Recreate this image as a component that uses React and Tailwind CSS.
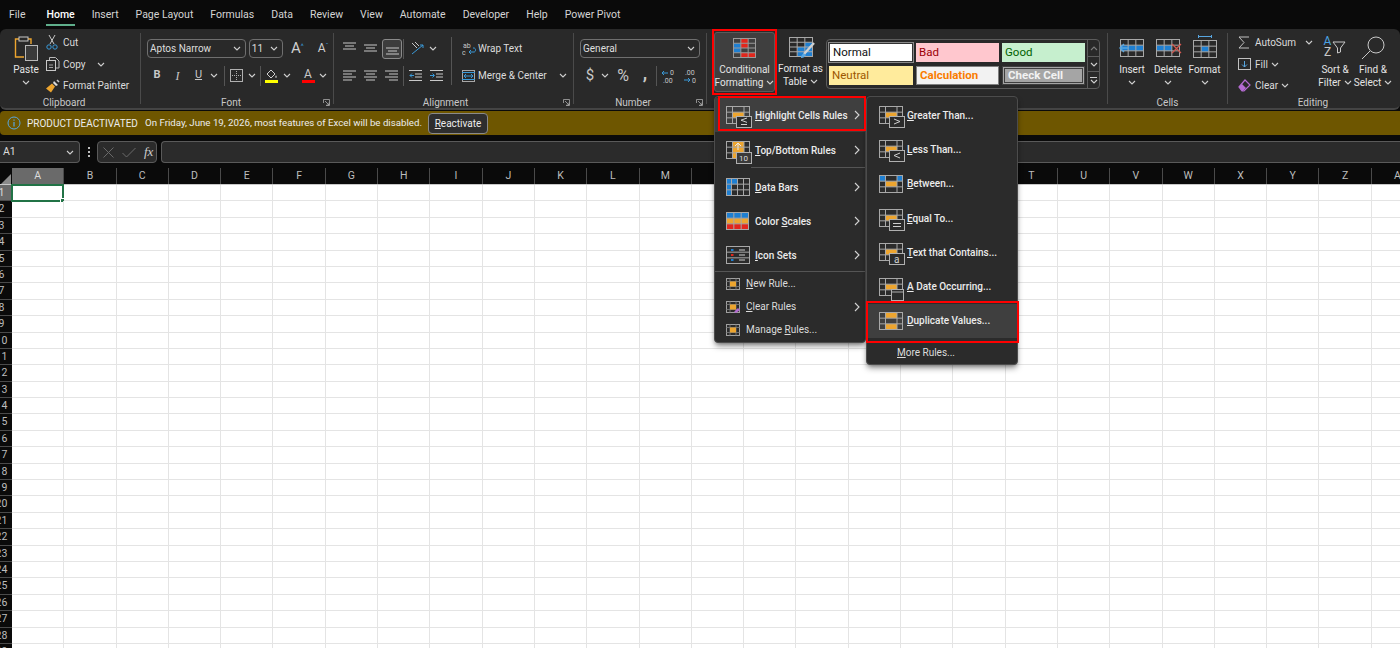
import { Fragment } from 'react';

const TABS = ['File', 'Home', 'Insert', 'Page Layout', 'Formulas', 'Data', 'Review', 'View', 'Automate', 'Developer', 'Help', 'Power Pivot'];
const COLUMNS = 'ABCDEFGHIJKLMNOPQRSTUVWXYZA'.split('');
const ROWS = Array.from({ length: 29 }, (_, i) => i + 1);

const BLUE = '#1f7fd1';
const ORANGE = '#eda52f';
const RED = '#e1261c';
const MENU_XS = [0, 6, 17.5, 23];

function Chev({ className = '' }) {
  return (
    <svg width="8" height="5" viewBox="0 0 8 5" className={className}>
      <path d="M1 1l3 3 3-3" fill="none" stroke="#cfcfcf" strokeWidth="1.1" />
    </svg>
  );
}

function Arrow() {
  return (
    <svg width="6" height="10" viewBox="0 0 6 10">
      <path d="M1 1l4 4-4 4" fill="none" stroke="#d4d4d4" strokeWidth="1.1" />
    </svg>
  );
}

// grid with some coloured cells: [col, row, colour, colspan, rowspan]
// xs gives the column edges when the columns are not equally wide
function Sheet({ w = 24, h = 18, cols = 3, rows = 3, xs, cells = [], stroke = '#a8a8a8', children }) {
  const edges = xs || Array.from({ length: cols + 1 }, (_, i) => (i * (w - 1)) / cols);
  const ch = (h - 1) / rows;
  return (
    <svg width={w} height={h} viewBox={`0 0 ${w} ${h}`} className="overflow-visible">
      {cells.map(([c, r, fill, cs = 1, rs = 1], i) => (
        <rect key={i} x={0.5 + edges[c]} y={0.5 + r * ch} width={edges[c + cs] - edges[c]} height={ch * rs} fill={fill} />
      ))}
      {edges.map((x, i) => (
        <line key={i} x1={0.5 + x} x2={0.5 + x} y1="0" y2={h} stroke={stroke} />
      ))}
      {Array.from({ length: rows + 1 }, (_, i) => (
        <line key={i} y1={0.5 + i * ch} y2={0.5 + i * ch} x1="0" x2={w} stroke={stroke} />
      ))}
      {children}
    </svg>
  );
}

function Badge({ children }) {
  return (
    <g>
      <rect x="10.5" y="10.5" width="15" height="11" fill="#2b2b2b" stroke="#b0b0b0" />
      {children}
    </g>
  );
}

function MenuIcon({ type }) {
  if (type === 'dup') return <Sheet w={23} h={18} xs={MENU_XS} cells={[[1, 0, ORANGE], [1, 2, ORANGE]]} />;
  if (type === 'between') return <Sheet w={23} h={18} xs={MENU_XS} cells={[[0, 0, BLUE], [2, 0, BLUE], [1, 1, ORANGE]]} />;
  return (
    <Sheet w={23} h={18} xs={MENU_XS} cells={[[1, 1, ORANGE]]}>
      {type === 'date' ? (
        <g>
          <rect x="12.5" y="11.5" width="12" height="11" fill="#2b2b2b" stroke="#b0b0b0" />
          <line x1="12" x2="25" y1="14" y2="14" stroke="#b0b0b0" />
        </g>
      ) : (
        <Badge>
          {type === 'gt' && <path d="M15 13l6 2.5-6 2.5" fill="none" stroke="#cfcfcf" />}
          {type === 'lt' && <path d="M21 13l-6 2.5 6 2.5" fill="none" stroke="#cfcfcf" />}
          {type === 'eq' && <path d="M14 14.5h8M14 17.5h8" stroke="#cfcfcf" />}
          {type === 'a' && <text x="15" y="19.5" fontSize="10" fill="#cfcfcf">a</text>}
        </Badge>
      )}
    </Sheet>
  );
}

function LeftIcon({ type }) {
  if (type === 'highlight') {
    return (
      <Sheet w={23} h={18} xs={MENU_XS} cells={[[1, 1, ORANGE]]}>
        <Badge><path d="M21 12l-6 2.2 6 2.2M15 18.5h6" fill="none" stroke="#cfcfcf" /></Badge>
      </Sheet>
    );
  }
  if (type === 'top') {
    return (
      <Sheet w={23} h={18} xs={MENU_XS} cells={[[1, 0, ORANGE, 1, 3]]}>
        <path d="M12 9V2M9 5l3-3 3 3" fill="none" stroke="#e8e8e8" />
        <rect x="10.5" y="11.5" width="15" height="11" fill="#3a3a3a" stroke="#b0b0b0" />
        <text x="13" y="20" fontSize="8" fill="#dcdcdc">10</text>
      </Sheet>
    );
  }
  if (type === 'bars') {
    return <Sheet w={23} h={18} xs={[0, 5, 11, 17, 23]} rows={3} cells={[[0, 0, BLUE, 2, 1], [0, 1, BLUE, 1, 1], [0, 2, BLUE, 1, 1]]} />;
  }
  if (type === 'scales') return <Sheet w={23} h={18} cols={3} rows={3} cells={[[0, 0, BLUE, 3, 1], [0, 1, ORANGE, 3, 1], [0, 2, RED, 3, 1]]} />;
  return (
    <Sheet w={23} h={18} xs={[0, 23]} rows={3}>
      <rect x="5" y="3" width="2.5" height="2" fill={BLUE} />
      <rect x="5" y="8" width="2.5" height="2" fill={RED} />
      <rect x="5" y="13" width="2.5" height="2" fill={BLUE} />
      <path d="M13 4h6M13 9h6M13 14h6" stroke="#cfcfcf" />
    </Sheet>
  );
}

function SmallRuleIcon({ type }) {
  return (
    <svg width="14" height="12" viewBox="0 0 14 12">
      <rect x="0.5" y="0.5" width="13" height="11" fill="none" stroke="#a0a0a0" />
      <path d="M4 .5v11M10 .5v11M.5 3.5h13M.5 8.5h13" stroke="#707070" />
      <rect x="4" y="3.5" width="6" height="5" fill={ORANGE} />
      {type === 'clear' && <path d="M8 11l4-4 2 2-4 3z" fill="#b46bd1" />}
    </svg>
  );
}

function Launcher() {
  return (
    <svg width="7" height="7" viewBox="0 0 7 7" className="absolute right-[3px] bottom-[3px]">
      <path d="M.5 4V.5H6.5V6.5H3M2 2l4 4M6 3.5V6H3.5" fill="none" stroke="#a8a8a8" strokeWidth="0.8" />
    </svg>
  );
}

function Group({ width, label, pad = '', children, noBorder }) {
  return (
    <div className={`relative flex flex-col shrink-0 ${width} ${noBorder ? '' : 'border-r border-[#4a4a4a]'}`}>
      <div className="flex-1 min-h-0">{children}</div>
      {label && (
        <div className={`relative h-[14px] mb-[-5px] flex items-center justify-center text-[10px] text-[#c8c8c8] ${pad}`}>
          {label}
        </div>
      )}
    </div>
  );
}

function BigButton({ icon, lines, width = 'w-[36px]', chevronBelow }) {
  return (
    <div className={`${width} shrink-0 flex flex-col items-center text-[10px] leading-[13px] text-[#e4e4e4]`}>
      <div className="h-[30px] flex items-center justify-center">{icon}</div>
      {lines.map((l, i) => (
        <div key={i} className="whitespace-nowrap flex items-center gap-[3px] h-[13px]">
          {l}
          {!chevronBelow && i === lines.length - 1 && <Chev />}
        </div>
      ))}
      {chevronBelow && <div className="h-[13px] flex items-center"><Chev /></div>}
    </div>
  );
}

function Combo({ width, children }) {
  return (
    <div className={`${width} h-[19px] flex items-center justify-between pl-[2px] pr-[4px] border border-[#6f6f6f] rounded-[4px] text-[10px] text-[#dedede]`}>
      <span>{children}</span>
      <Chev />
    </div>
  );
}

function Cell({ width, children }) {
  return <div className={`${width} shrink-0 h-full flex items-center justify-center text-[#c8c8c8]`}>{children}</div>;
}

function VSep() {
  return <div className="w-px h-[20px] shrink-0 bg-[#555555]" />;
}

function Lines({ rows }) {
  return (
    <svg width="13" height="13" viewBox="0 0 13 13">
      {rows.map(([x1, x2, y], i) => (
        <line key={i} x1={x1} x2={x2} y1={y} y2={y} stroke="#c8c8c8" />
      ))}
    </svg>
  );
}

function Indent({ flip }) {
  return (
    <svg width="13" height="11" viewBox="0 0 13 11">
      <path d="M0 .5h13M6 4h7M6 7h7M0 10.5h13" stroke="#c8c8c8" />
      <path d={flip ? 'M0 5.5h4M2.5 3.5l2 2-2 2' : 'M5 5.5H1M3 3.5l-2 2 2 2'} fill="none" stroke="#3a9ad9" />
    </svg>
  );
}

function StyleCell({ className, children }) {
  return <div className={`h-[19px] flex items-center pl-[3px] text-[11.5px] ${className}`}>{children}</div>;
}

function MenuItem({ icon, arrow, active, small, className = '', children, pl = 'pl-[12px]', gap = 'gap-[6px]' }) {
  return (
    <div className={`flex items-center ${pl} ${gap} pr-[5px] ${small ? 'h-[23px]' : 'h-[34.3px]'} ${active ? 'bg-[#3f3f3f]' : ''} ${className}`}>
      <div className={`${small ? 'w-[16px]' : 'w-[27px]'} shrink-0 flex items-center`}>{icon}</div>
      <div className={`flex-1 whitespace-nowrap text-[10px] ${small ? 'text-[#dcdcdc]' : 'font-medium text-[#ececec]'}`}>{children}</div>
      {arrow && <Arrow />}
    </div>
  );
}

export default function App() {
  return (
    <div className="relative w-[1400px] h-[648px] overflow-hidden flex flex-col bg-[#0a0a0a] font-['Roboto',sans-serif]">
      {/* Tabs */}
      <div className="h-[29px] shrink-0 flex items-center gap-[17px] pl-[9px] text-[10.5px] text-[#d4d4d4]">
        {TABS.map((t) => (
          <div key={t} className={`relative whitespace-nowrap ${t === 'Home' ? 'font-medium text-white' : ''} ${t === 'File' ? 'mr-[4px]' : ''}`}>
            {t}
            {t === 'Home' && <div className="absolute left-0 right-0 top-[17px] h-[2px] bg-[#5fae8b]" />}
          </div>
        ))}
      </div>

      {/* Ribbon */}
      <div className="h-[81px] shrink-0 flex py-[4px] bg-[#292929] rounded-[6px] border-b-2 border-[#444444]">
        <Group width="w-[141px]" label="Clipboard" pad="pr-[12px]">
          <div className="flex pl-[8px]">
            <BigButton
              chevronBelow
              lines={['Paste']}
              icon={
                <svg width="25" height="26" viewBox="0 0 25 26">
                  <path d="M5 4H1.5V22H10" fill="none" stroke={ORANGE} strokeWidth="1.4" />
                  <path d="M14 4h3v5" fill="none" stroke={ORANGE} strokeWidth="1.4" />
                  <rect x="5" y="2" width="9" height="4" fill="#292929" stroke="#c8c8c8" />
                  <rect x="11.5" y="10.5" width="12" height="15" fill="#3a3a3a" stroke="#b8b8b8" />
                </svg>
              }
            />
            <div className="-mt-[1px] ml-[2px] text-[10px] text-[#dcdcdc]">
              <div className="h-[21px] flex items-center">
                <div className="w-[17px]">
                  <svg width="12" height="15" viewBox="0 0 12 15">
                    <path d="M3 0l5 9M9 0L4 9" stroke="#c8c8c8" />
                    <circle cx="3" cy="12" r="2.2" fill="none" stroke="#3a9ad9" />
                    <circle cx="9" cy="12" r="2.2" fill="none" stroke="#3a9ad9" />
                  </svg>
                </div>
                Cut
              </div>
              <div className="h-[22px] flex items-center">
                <div className="w-[17px]">
                  <svg width="14" height="14" viewBox="0 0 14 14">
                    <path d="M3.5 3V.5h6l3.5 3.5v7h-3" fill="none" stroke="#b8b8b8" />
                    <rect x=".5" y="3.5" width="9" height="10" fill="#292929" stroke="#c8c8c8" />
                    <path d="M3 8h4M3 10.5h4" stroke="#a0a0a0" />
                  </svg>
                </div>
                Copy
                <Chev className="ml-[11px]" />
              </div>
              <div className="h-[21px] flex items-center">
                <div className="w-[17px]">
                  <svg width="14" height="14" viewBox="0 0 14 14">
                    <path d="M8 2l4 4-2 1-3-3z" fill="#dcdcdc" />
                    <path d="M6 4.5l3 3-4 6-5-4z" fill={ORANGE} />
                    <path d="M11 1l2 2" stroke="#c8c8c8" strokeWidth="1.6" />
                  </svg>
                </div>
                Format Painter
              </div>
            </div>
          </div>
        </Group>
        <Group width="w-[193px]" label={<>Font<Launcher /></>} pad="pr-[12px]">
          <div className="pl-[6px] pt-[6px]">
            <div className="flex items-center gap-[3px] h-[18px]">
              <Combo width="w-[100px]">Aptos Narrow</Combo>
              <Combo width="w-[34px]">11</Combo>
              <div className="w-[20px] ml-[2px] text-center text-[15px] leading-none text-[#d0d0d0]">A<sup className="text-[7px] text-[#3a9ad9]">^</sup></div>
              <div className="w-[20px] ml-[3px] text-center text-[12px] leading-none text-[#d0d0d0]">A<sup className="text-[7px] text-[#3a9ad9]">ˇ</sup></div>
            </div>
            <div className="flex items-center h-[19px] mt-[9px] text-[11px]">
              <Cell width="w-[20px]"><span className="font-bold">B</span></Cell>
              <Cell width="w-[21px]"><span className="italic font-['Liberation_Serif',serif] text-[12px]">I</span></Cell>
              <Cell width="w-[21px]"><span className="underline">U</span></Cell>
              <Cell width="w-[10px]"><Chev /></Cell>
              <div className="w-[5px]" />
              <VSep />
              <Cell width="w-[23px]">
                <svg width="13" height="13" viewBox="0 0 13 13">
                  <rect x=".5" y=".5" width="12" height="12" fill="none" stroke="#b0b0b0" />
                  <path d="M6.5 0v13M0 6.5h13" stroke="#b0b0b0" strokeDasharray="1 1" />
                </svg>
              </Cell>
              <Cell width="w-[8px]"><Chev /></Cell>
              <div className="w-[4px]" />
              <VSep />
              <Cell width="w-[22px]">
                <svg width="14" height="15" viewBox="0 0 14 15">
                  <path d="M2 6l4-4 4 4-4 4z" fill="none" stroke="#d0d0d0" />
                  <path d="M11 7l1 2.5h-2z" fill="#d0d0d0" />
                  <rect x="0" y="12" width="13" height="3" fill="#ffff00" />
                </svg>
              </Cell>
              <Cell width="w-[8px]"><Chev /></Cell>
              <div className="w-[9px]" />
              <Cell width="w-[16px]">
                <div className="flex flex-col items-center leading-[11px] text-[12px]">
                  A
                  <div className="w-[13px] h-[3px] bg-[#ff0000]" />
                </div>
              </Cell>
              <div className="w-[3px]" />
              <Cell width="w-[8px]"><Chev /></Cell>
            </div>
          </div>
        </Group>
        <Group width="w-[240px]" label={<>Alignment<Launcher /></>} pad="pr-[16px]">
          <div className="pl-[8px] pt-[6px] flex">
            <div className="w-[108px] shrink-0">
              <div className="flex items-center h-[19px]">
                <Cell width="w-[14px]"><Lines rows={[[0, 13, 1], [2, 11, 4], [0, 13, 7]]} /></Cell>
                <div className="w-[7px]" />
                <Cell width="w-[14px]"><Lines rows={[[0, 13, 3], [2, 11, 6], [0, 13, 9]]} /></Cell>
                <div className="w-[5px]" />
                <div className="w-[20px] h-[20px] flex items-center justify-center border border-[#8a8a8a] rounded-[3px] bg-[#3d3d3d]">
                  <Lines rows={[[0, 13, 6], [2, 11, 9], [0, 13, 12]]} />
                </div>
                <div className="w-[1px]" />
                <VSep />
                <Cell width="w-[25px]">
                  <svg width="14" height="13" viewBox="0 0 14 13">
                    <path d="M2 1l5 5M5 0l4 4" stroke="#c8c8c8" />
                    <path d="M2 12L13 3M10 3h3v3" fill="none" stroke="#3a9ad9" />
                  </svg>
                </Cell>
                <Chev />
              </div>
              <div className="flex items-center h-[19px] mt-[8px]">
                <Cell width="w-[14px]"><Lines rows={[[0, 13, 2], [0, 9, 5], [0, 13, 8], [0, 9, 11]]} /></Cell>
                <div className="w-[7px]" />
                <Cell width="w-[14px]"><Lines rows={[[0, 13, 2], [2, 11, 5], [0, 13, 8], [2, 11, 11]]} /></Cell>
                <div className="w-[7px]" />
                <Cell width="w-[14px]"><Lines rows={[[0, 13, 2], [4, 13, 5], [0, 13, 8], [4, 13, 11]]} /></Cell>
                <div className="w-[5px]" />
                <VSep />
                <div className="w-[4px]" />
                <Cell width="w-[14px]"><Indent /></Cell>
                <div className="w-[7px]" />
                <Cell width="w-[14px]"><Indent flip /></Cell>
              </div>
            </div>
            <div className="w-px h-[48px] -mt-[2px] ml-[1px] bg-[#555555]" />
            <div className="pl-[10px] text-[10px] text-[#dcdcdc]">
              <div className="flex items-center h-[19px]">
                <svg width="16" height="14" viewBox="0 0 16 14">
                  <text x="1" y="6" fontSize="7" fill="#c8c8c8">ab</text>
                  <text x="0" y="13" fontSize="7" fill="#c8c8c8">c</text>
                  <path d="M7 10h5c2 0 2-4 0-4h-1M9 8l-2 2 2 2" fill="none" stroke="#3a9ad9" />
                </svg>
                Wrap Text
              </div>
              <div className="flex items-center h-[19px] mt-[8px] gap-[3px]">
                <svg width="13" height="12" viewBox="0 0 13 12">
                  <rect x=".5" y=".5" width="12" height="11" fill="none" stroke="#a8a8a8" />
                  <path d="M0 2.5h13M0 9.5h13" stroke="#3a9ad9" />
                  <path d="M2 6h9M4 4L2 6l2 2M9 4l2 2-2 2" fill="none" stroke="#3a9ad9" />
                </svg>
                Merge &amp; Center
                <Chev className="ml-[9px]" />
              </div>
            </div>
          </div>
        </Group>
        <Group width="w-[133px]" label={<>Number<Launcher /></>} pad="pr-[14px]">
          <div className="pl-[6px] pt-[6px]">
            <Combo width="w-[120px]">General</Combo>
            <div className="flex items-center h-[19px] mt-[8px] text-[#c8c8c8]">
              <Cell width="w-[20px]"><span className="text-[15px]">$</span></Cell>
              <Cell width="w-[10px]"><Chev /></Cell>
              <Cell width="w-[26px]"><span className="text-[16px]">%</span></Cell>
              <Cell width="w-[18px]"><span className="text-[18px] leading-none font-bold -mt-[6px]">,</span></Cell>
              <div className="w-[2px]" />
              <VSep />
              <Cell width="w-[24px]">
                <svg width="14" height="14" viewBox="0 0 14 14">
                  <path d="M0 4h6M2 2L0 4l2 2" fill="none" stroke="#3a9ad9" />
                  <text x="8" y="6" fontSize="7" fill="#c8c8c8">0</text>
                  <text x="1" y="14" fontSize="7" fill="#c8c8c8">.00</text>
                </svg>
              </Cell>
              <Cell width="w-[20px]">
                <svg width="14" height="14" viewBox="0 0 14 14">
                  <text x="1" y="6" fontSize="7" fill="#c8c8c8">.00</text>
                  <path d="M0 11h6M4 9l2 2-2 2" fill="none" stroke="#3a9ad9" />
                  <text x="8" y="14" fontSize="7" fill="#c8c8c8">0</text>
                </svg>
              </Cell>
            </div>
          </div>
        </Group>
        <Group width="w-[401px]">
          <div className="flex pl-[7px] -mt-[1px]">
            <div className="w-[61px] h-[60px] bg-[#3f3f3f] rounded-[3px] border border-[#5a5a5a] flex justify-center">
              <BigButton
                width="w-[61px]"
                lines={['Conditional', 'Formatting']}
                icon={<Sheet w={23} h={20} cols={3} rows={4} stroke="#9a9a9a" cells={[[1, 0, RED], [0, 1, BLUE], [1, 1, RED], [0, 2, BLUE], [1, 3, RED, 2, 1], [2, 2, '#3f3f3f']]} />}
              />
            </div>
            <div className="ml-[2px] -mr-[2px]">
              <BigButton
                width="w-[47px]"
                lines={['Format as', 'Table']}
                icon={
                  <Sheet w={24} h={20} cols={3} rows={4} cells={[[1, 2, BLUE, 2, 2], [2, 1, BLUE]]}>
                    <path d="M25 6L15 17" stroke="#d0d0d0" strokeWidth="2.4" />
                    <path d="M12 21c2 0 5-1 4-4-3-1-4 2-4 4z" fill="#58a6e0" />
                  </Sheet>
                }
              />
            </div>
            <div className="w-[274px] h-[50px] mt-[7px] ml-[4px] flex border border-[#5c5c5c] rounded-[4px] pl-[2px] pt-[3px] shrink-0">
              <div className="grid grid-cols-[84px_83px_83px] gap-x-[3px] gap-y-[4px] w-[260px] h-[42px]">
                <StyleCell className="bg-white border border-[#333333] outline outline-[#8a8a8a] text-[#111111]">Normal</StyleCell>
                <StyleCell className="bg-[#ffc7ce] text-[#9c0006]">Bad</StyleCell>
                <StyleCell className="bg-[#c6efce] text-[#006100]">Good</StyleCell>
                <StyleCell className="bg-[#ffeb9c] text-[#9c5700]">Neutral</StyleCell>
                <StyleCell className="bg-[#f2f2f2] border border-[#7f7f7f] font-bold text-[#fa7d00]">Calculation</StyleCell>
                <StyleCell className="bg-[#a5a5a5] border-[3px] border-double border-[#3f3f3f] font-bold text-[#f2f2f2]">Check Cell</StyleCell>
              </div>
              <div className="flex flex-col w-[12px] h-[48px] -mt-[3px] ml-[1px] border-l border-[#5c5c5c]">
                <div className="h-[16px] flex items-center justify-center"><Chev className="rotate-180 opacity-50" /></div>
                <div className="h-[16px] flex items-center justify-center border-y border-[#5c5c5c]"><Chev /></div>
                <div className="h-[16px] flex flex-col items-center justify-center gap-[1px]">
                  <div className="w-[7px] h-px bg-[#cfcfcf]" />
                  <Chev />
                </div>
              </div>
            </div>
          </div>
        </Group>
        <Group width="w-[120px]" label="Cells">
          <div className="flex pl-[6px]">
            <BigButton
              chevronBelow
              lines={['Insert']}
              icon={
                <Sheet w={24} h={18} cols={3} rows={3} cells={[[0, 1, BLUE, 3, 1]]}>
                  <path d="M9 9H0M4 5L0 9l4 4" fill="none" stroke="#58a6e0" strokeWidth="1.4" />
                </Sheet>
              }
            />
            <BigButton
              chevronBelow
              lines={['Delete']}
              icon={
                <Sheet w={24} h={18} cols={3} rows={3} cells={[[0, 1, BLUE, 2, 1]]}>
                  <path d="M16 5l9 9M25 5l-9 9" stroke="#d1574f" strokeWidth="1.3" />
                </Sheet>
              }
            />
            <BigButton
              chevronBelow
              lines={['Format']}
              width="w-[37px]"
              icon={
                <div className="flex flex-col items-center gap-[2px] mt-[-3px]">
                  <svg width="14" height="3" viewBox="0 0 14 3"><path d="M.5 0v3M13.5 0v3M0 1.5h14" stroke="#58a6e0" /></svg>
                  <Sheet w={24} h={18} cols={3} rows={3} cells={[[1, 1, BLUE]]} />
                </div>
              }
            />
          </div>
        </Group>
        <Group width="w-[170px]" label="Editing" noBorder>
          <div className="flex pl-[10px]">
            <div className="w-[78px] shrink-0 -mt-[1px] text-[10px] text-[#dcdcdc]">
              <div className="h-[21px] flex items-center">
                <svg width="12" height="13" viewBox="0 0 12 13" className="mr-[5px]">
                  <path d="M11 1H1l5 5.5L1 12h10" fill="none" stroke="#c0c0c0" />
                </svg>
                AutoSum
                <Chev className="ml-[9px]" />
              </div>
              <div className="h-[22px] flex items-center">
                <svg width="13" height="12" viewBox="0 0 13 12" className="mr-[4px]">
                  <rect x=".5" y=".5" width="12" height="11" fill="none" stroke="#c0c0c0" />
                  <path d="M6.5 3v6M4 6.5l2.5 2.5L9 6.5" fill="none" stroke="#58a6e0" />
                </svg>
                Fill
                <Chev className="ml-[3px]" />
              </div>
              <div className="h-[21px] flex items-center">
                <svg width="13" height="13" viewBox="0 0 13 13" className="mr-[4px]">
                  <path d="M1 8l6-7 5 5-6 6H4z" fill="none" stroke="#b46bd1" strokeWidth="1.2" />
                  <path d="M1 8l3-3 4 4-3 3H4z" fill="#b46bd1" />
                </svg>
                Clear
                <Chev className="ml-[3px]" />
              </div>
            </div>
            <BigButton
              width="w-[38px]"
              lines={['Sort &', 'Filter']}
              icon={
                <div className="flex items-center gap-[1px] -mt-[2px] text-[12px] leading-[11px]">
                  <div className="flex flex-col items-center">
                    <span className="text-[#4aa3e3]">A</span>
                    <span className="text-[#c8c8c8]">Z</span>
                  </div>
                  <svg width="14" height="14" viewBox="0 0 14 14">
                    <path d="M1 2h12L8.5 8v4l-3 1V8z" fill="none" stroke="#c8c8c8" />
                  </svg>
                </div>
              }
            />
            <BigButton
              width="w-[38px]"
              lines={['Find &', 'Select']}
              icon={
                <svg width="25" height="25" viewBox="0 0 25 25" className="-mt-[1px]">
                  <circle cx="15" cy="10" r="8" fill="none" stroke="#c8c8c8" />
                  <path d="M9 16l-8 8" stroke="#c8c8c8" />
                </svg>
              }
            />
          </div>
        </Group>
      </div>

      {/* Deactivation notice */}
      <div className="h-[24px] mt-px shrink-0 flex items-center pl-[7px] bg-[#6e5600] rounded-l-[4px] text-[10px] text-[#ececec]">
        <svg width="14" height="14" viewBox="0 0 14 14" className="mr-[6px]">
          <circle cx="7" cy="7" r="6" fill="none" stroke="#58a6e0" />
          <path d="M7 6v4.5M7 3.5v1.2" stroke="#58a6e0" strokeWidth="1.2" />
        </svg>
        <span className="w-[118px] whitespace-nowrap">PRODUCT DEACTIVATED</span>
        <span className="w-[283px] whitespace-nowrap text-[9.7px]">On Friday, June 19, 2026, most features of Excel will be disabled.</span>
        <div className="w-[60px] h-[21px] flex items-center justify-center border border-[#8a8a8a] rounded-[4px] bg-[#2e2e2e]">
          <span><u>R</u>eactivate</span>
        </div>
      </div>

      {/* Formula bar */}
      <div className="h-[22px] mt-[6px] shrink-0 flex items-center bg-[#0a0a0a]">
        <div className="w-[80px] h-full flex items-center justify-between pl-[3px] pr-[5px] bg-[#2b2b2b] border border-l-0 border-[#5a5a5a] rounded-r-[4px] text-[10.5px] text-[#dcdcdc]">
          A1
          <Chev />
        </div>
        <div className="w-[17px] flex flex-col items-center gap-[2px]">
          <div className="w-[2px] h-[2px] bg-[#bdbdbd]" />
          <div className="w-[2px] h-[2px] bg-[#bdbdbd]" />
          <div className="w-[2px] h-[2px] bg-[#bdbdbd]" />
        </div>
        <div className="w-[60px] h-full flex items-center pl-[5px] gap-[8px] bg-[#2b2b2b] border border-[#5a5a5a] rounded-[4px]">
          <svg width="11" height="11" viewBox="0 0 11 11"><path d="M.5.5l10 10M10.5.5l-10 10" stroke="#6a6a6a" /></svg>
          <svg width="14" height="11" viewBox="0 0 14 11"><path d="M.5 6l4 4 9-9" fill="none" stroke="#6a6a6a" /></svg>
          <span className="italic font-['Liberation_Serif',serif] text-[13px] text-[#cfcfcf]">fx</span>
        </div>
        <div className="flex-1 h-full ml-[4px] bg-[#2b2b2b] border-y border-l border-[#5a5a5a] rounded-l-[4px]" />
      </div>

      {/* Sheet */}
      <div className="flex-1 min-h-0 mt-[5px] bg-white overflow-hidden">
        <div className="grid grid-cols-[12px_repeat(27,52.3px)] h-[17px] bg-[#0a0a0a] border-b border-[#c8c8c8]">
          <div className="flex items-end justify-end pr-px">
            <svg width="10" height="10" viewBox="0 0 10 10"><path d="M10 0v10H0z" fill="#8a8a8a" /></svg>
          </div>
          {COLUMNS.map((c, i) => (
            <div
              key={i}
              className={`flex items-center justify-center text-[10.5px] border-r border-[#4a4a4a] ${i === 0 ? 'bg-[#6a6a6a] text-[#dcdcdc]' : 'text-[#bdbdbd]'}`}
            >
              {c}
            </div>
          ))}
        </div>
        <div className="grid grid-cols-[12px_repeat(27,52.3px)] auto-rows-[16.4px]">
          {ROWS.map((r) => (
            <Fragment key={r}>
              <div className={`overflow-hidden border-b border-[#4a4a4a] text-[10.5px] leading-[16px] ${r === 1 ? 'bg-[#6a6a6a] text-[#dcdcdc]' : 'bg-[#0a0a0a] text-[#bdbdbd]'}`}>
                <div className="-ml-[6px] w-[15px] text-center">{r}</div>
              </div>
              {COLUMNS.map((c, i) => (
                <div key={i} className="relative border-r border-b border-[#e4e4e4]">
                  {r === 1 && i === 0 && (
                    <div className="absolute -left-px -top-px w-[53px] h-[17.5px] border-2 border-[#217346]">
                      <div className="absolute -right-[3px] -bottom-[3px] w-[5px] h-[5px] bg-[#217346] border border-white" />
                    </div>
                  )}
                </div>
              ))}
            </Fragment>
          ))}
        </div>
      </div>

      {/* Conditional Formatting menu */}
      <div className="absolute left-[714px] top-[96px] w-[152px] h-[247px] pt-px bg-[#2b2b2b] border border-[#4c4c4c] rounded-[4px] shadow-md shadow-black/40">
        <MenuItem active arrow pl="pl-[11px]" gap="gap-[2px]" className="!h-[34px]" icon={<LeftIcon type="highlight" />}><u>H</u>ighlight Cells Rules</MenuItem>
        <MenuItem arrow pl="pl-[11px]" gap="gap-[2px]" className="!h-[34px] mt-px" icon={<LeftIcon type="top" />}><u>T</u>op/Bottom Rules</MenuItem>
        <div className="ml-[36px] h-px mb-[2px] bg-[#555555]" />
        <MenuItem arrow pl="pl-[11px]" gap="gap-[2px]" className="!h-[34px]" icon={<LeftIcon type="bars" />}><u>D</u>ata Bars</MenuItem>
        <MenuItem arrow pl="pl-[11px]" gap="gap-[2px]" className="!h-[34px]" icon={<LeftIcon type="scales" />}>Color <u>S</u>cales</MenuItem>
        <MenuItem arrow pl="pl-[11px]" gap="gap-[2px]" className="!h-[34px]" icon={<LeftIcon type="icons" />}><u>I</u>con Sets</MenuItem>
        <div className="h-px -mt-px bg-[#555555]" />
        <MenuItem small pl="pl-[11px]" gap="gap-[4px]" icon={<SmallRuleIcon />}><u>N</u>ew Rule...</MenuItem>
        <MenuItem small arrow pl="pl-[11px]" gap="gap-[4px]" icon={<SmallRuleIcon type="clear" />}><u>C</u>lear Rules</MenuItem>
        <MenuItem small pl="pl-[11px]" gap="gap-[4px]" icon={<SmallRuleIcon />}>Manage <u>R</u>ules...</MenuItem>
      </div>

      {/* Highlight Cells Rules submenu */}
      <div className="absolute left-[866px] top-[96px] w-[152px] h-[269px] pt-px bg-[#2b2b2b] border border-[#4c4c4c] rounded-[4px] shadow-md shadow-black/40">
        <MenuItem gap="gap-[1px]" icon={<MenuIcon type="gt" />}><u>G</u>reater Than...</MenuItem>
        <MenuItem gap="gap-[1px]" icon={<MenuIcon type="lt" />}><u>L</u>ess Than...</MenuItem>
        <MenuItem gap="gap-[1px]" icon={<MenuIcon type="between" />}><u>B</u>etween...</MenuItem>
        <MenuItem gap="gap-[1px]" icon={<MenuIcon type="eq" />}><u>E</u>qual To...</MenuItem>
        <MenuItem gap="gap-[1px]" icon={<MenuIcon type="a" />}><u>T</u>ext that Contains...</MenuItem>
        <MenuItem gap="gap-[1px]" icon={<MenuIcon type="date" />}><u>A</u> Date Occurring...</MenuItem>
        <MenuItem active gap="gap-[1px]" icon={<MenuIcon type="dup" />}><u>D</u>uplicate Values...</MenuItem>
        <div className="h-[24px] mt-[2px] flex items-center pl-[30px] text-[10px] text-[#dcdcdc]"><span><u>M</u>ore Rules...</span></div>
      </div>

      {/* Red annotation frames */}
      <div className="absolute left-[712px] top-[29px] w-[65px] h-[66px] border-2 border-[#ff0000]" />
      <div className="absolute left-[718px] top-[96px] w-[148px] h-[35px] border-2 border-[#ff0000]" />
      <div className="absolute left-[866px] top-[301px] w-[153px] h-[42px] border-2 border-[#ff0000]" />
    </div>
  );
}
